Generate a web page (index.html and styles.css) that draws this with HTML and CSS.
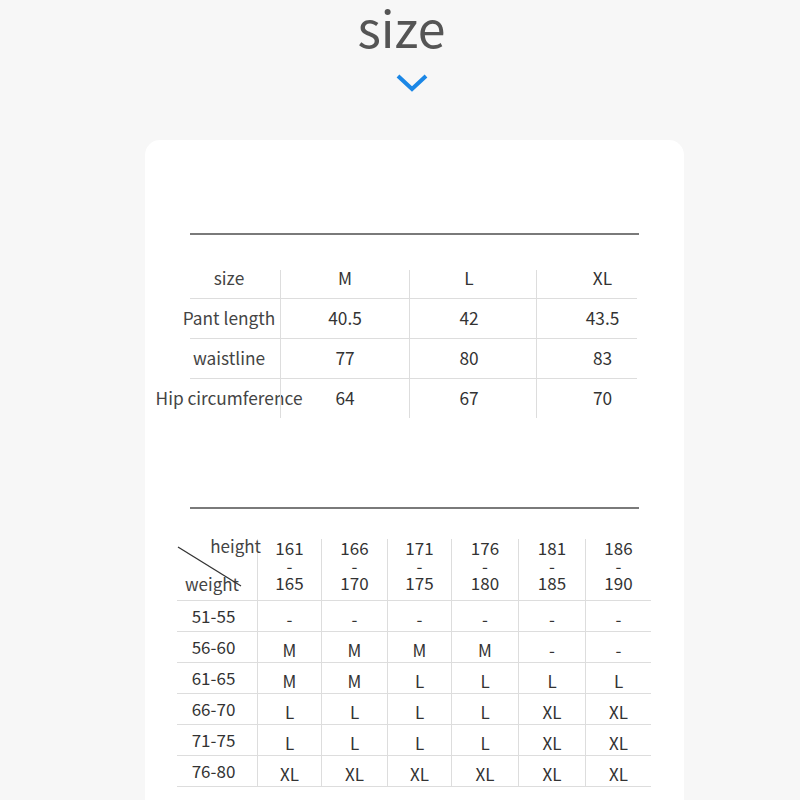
FILE: index.html
```html
<!DOCTYPE html>
<html>
<head>
<meta charset="utf-8">
<link rel="stylesheet" href="styles.css">
</head>
<body>
<header class="head">
  <h1 class="title">size</h1>
  <svg class="chev" width="32" height="18" viewBox="0 0 32 18"><polyline points="2,2 16,15 30,2" fill="none" stroke="#1b87e6" stroke-width="4"/></svg>
</header>
<main class="card">
  <div class="rule"></div>
  <div class="t1">
    <div class="c lab r1">size</div>
    <div class="c v1 r1">M</div>
    <div class="c v2 r1">L</div>
    <div class="c v3 r1">XL</div>

    <div class="c lab">Pant length</div>
    <div class="c v1 rt">40.5</div>
    <div class="c v2 rt">42</div>
    <div class="c v3 rt">43.5</div>

    <div class="c lab">waistline</div>
    <div class="c v1 rt">77</div>
    <div class="c v2 rt">80</div>
    <div class="c v3 rt">83</div>

    <div class="c lab">Hip circumference</div>
    <div class="c v1 rt">64</div>
    <div class="c v2 rt">67</div>
    <div class="c v3 rt">70</div>
  </div>
  <div class="rule rule2"></div>
  <div class="t2">
    <div class="h corner">
      <svg class="diag" width="70" height="50" viewBox="0 0 70 50"><line x1="1" y1="8" x2="64" y2="47" stroke="#333" stroke-width="1.3"/></svg>
      <span class="hh">height</span>
      <span class="hw">weight</span>
    </div>
    <div class="h n">161<br>-<br>165</div>
    <div class="h n">166<br>-<br>170</div>
    <div class="h n">171<br>-<br>175</div>
    <div class="h n">176<br>-<br>180</div>
    <div class="h n">181<br>-<br>185</div>
    <div class="h n">186<br>-<br>190</div>

    <div class="d w">51-55</div><div class="d">-</div><div class="d">-</div><div class="d">-</div><div class="d">-</div><div class="d">-</div><div class="d">-</div>
    <div class="d w">56-60</div><div class="d">M</div><div class="d">M</div><div class="d">M</div><div class="d">M</div><div class="d">-</div><div class="d">-</div>
    <div class="d w">61-65</div><div class="d">M</div><div class="d">M</div><div class="d">L</div><div class="d">L</div><div class="d">L</div><div class="d">L</div>
    <div class="d w">66-70</div><div class="d">L</div><div class="d">L</div><div class="d">L</div><div class="d">L</div><div class="d">XL</div><div class="d">XL</div>
    <div class="d w">71-75</div><div class="d">L</div><div class="d">L</div><div class="d">L</div><div class="d">L</div><div class="d">XL</div><div class="d">XL</div>
    <div class="d w">76-80</div><div class="d">XL</div><div class="d">XL</div><div class="d">XL</div><div class="d">XL</div><div class="d">XL</div><div class="d">XL</div>
  </div>
</main>
</body>
</html>
```
FILE: styles.css
```css
html, body {
  margin: 0;
  padding: 0;
  background: #f7f7f7;
  font-family: "Noto Sans CJK SC", "Noto Sans", sans-serif;
  color: #333;
}
.head {
  display: flex;
  flex-direction: column;
  align-items: center;
}
.title {
  margin: 0 0 0 3px;
  font-size: 50px;
  line-height: 52px;
  font-weight: 400;
  color: #555;
}
.chev {
  display: block;
  margin-top: 22px;
  margin-left: 24px;
}
.card {
  margin: 48px 0 0 145px;
  width: 539px;
  box-sizing: border-box;
  background: #fff;
  border-radius: 15px;
  padding: 93px 0 100px 45px;
}
.rule {
  width: 449px;
  height: 2px;
  background: #7a7a7a;
}
.rule2 {
  margin-top: 89px;
}
.t1 {
  margin-top: 35px;
  display: grid;
  grid-template-columns: 90px 129px 127px 101px;
  grid-template-rows: 28px 40px 40px 40px;
  font-size: 17.3px;
}
.c {
  display: flex;
  align-items: center;
  justify-content: center;
  white-space: nowrap;
  box-sizing: border-box;
}
.t1 .lab {
  padding-right: 12px;
  padding-bottom: 2px;
  color: #444;
  border-top: 1px solid #ddd;
}
.t1 .r1 {
  border-top: none;
  padding-bottom: 13px;
}
.v1, .v2, .v3 {
  border-left: 1px solid #ddd;
}
.rt {
  border-top: 1px solid #ddd;
  padding-bottom: 2px;
}
.v2 { padding-right: 8px; }
.v3 { padding-left: 31px; }

.t2 {
  margin: 30px 0 0 -13px;
  display: grid;
  grid-template-columns: 80px 64px 66px 64px 67px 67px 66px;
  grid-template-rows: 62px repeat(6, 31px);
  width: 474px;
  font-size: 17px;
}
.h {
  border-bottom: 1px solid #ddd;
  box-sizing: border-box;
}
.corner {
  position: relative;
  display: flex;
  flex-direction: column;
  justify-content: space-between;
  padding: 0 0 7px 0;
  line-height: 18px;
  color: #444;
}
.hh {
  align-self: flex-end;
  margin-right: -4px;
  margin-top: -2px;
}
.hw {
  padding-left: 8px;
}
.diag {
  position: absolute;
  left: 0;
  top: 0;
}
.n {
  border-left: 1px solid #ddd;
  text-align: center;
  line-height: 17.5px;
  padding-top: 0;
}
.d {
  border-left: 1px solid #ddd;
  border-bottom: 1px solid #ddd;
  box-sizing: border-box;
  display: flex;
  align-items: center;
  justify-content: center;
  padding-top: 4px;
}
.d.w {
  border-left: none;
  padding-top: 0;
  padding-bottom: 2px;
  padding-right: 7px;
}
```
